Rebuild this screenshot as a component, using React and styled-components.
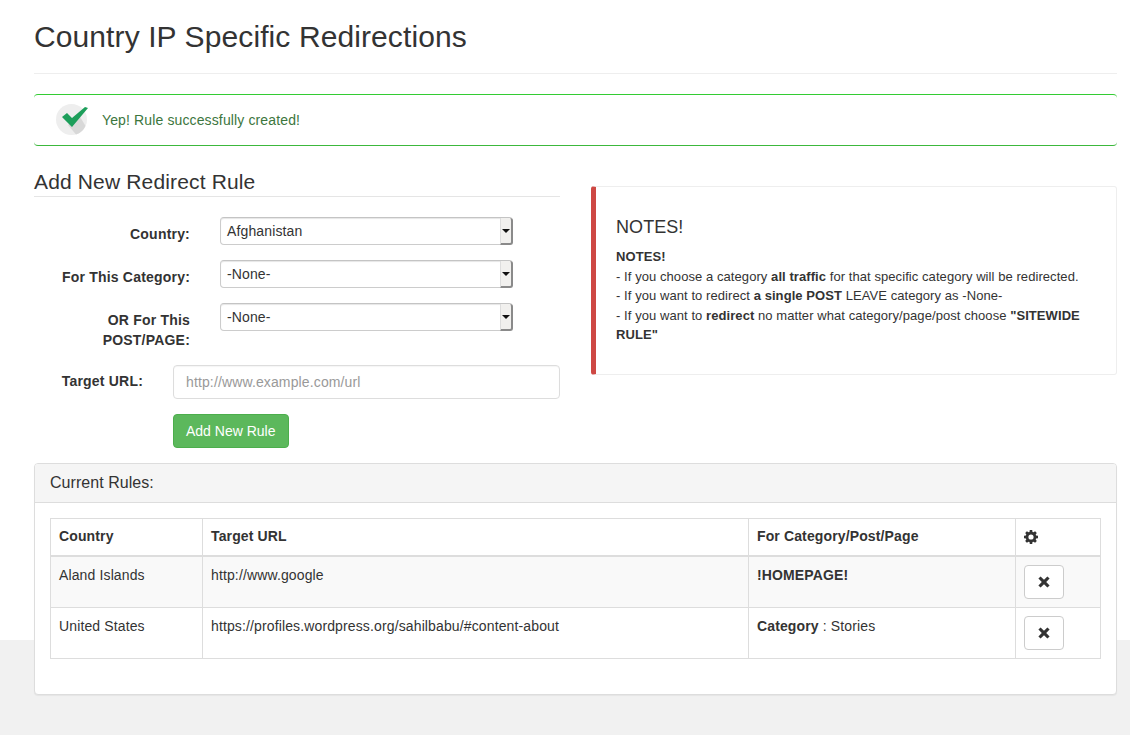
import React from 'react';
import styled, { createGlobalStyle } from 'styled-components';

const GlobalStyle = createGlobalStyle`
  html, body {
    margin: 0;
    padding: 0;
  }
  body {
    min-height: 735px;
    background: linear-gradient(#fff 640px, #f1f1f1 640px);
    font-family: "Liberation Sans", Arial, sans-serif;
    font-size: 14px;
    line-height: 20px;
    letter-spacing: 0.13px;
    color: #333;
  }
  * {
    box-sizing: border-box;
  }
`;

const Page = styled.div`
  padding: 0 13px 40px 34px;
`;

const Title = styled.h1`
  margin: 0;
  padding: 20px 0 20px;
  font-size: 30px;
  line-height: 33px;
  font-weight: 400;
  letter-spacing: 0.1px;
  border-bottom: 1px solid #eee;
`;

const SuccessAlert = styled.div`
  display: flex;
  align-items: center;
  gap: 12px;
  height: 52px;
  margin-top: 20px;
  padding-left: 22px;
  border-top: 1px solid #33cc33;
  border-bottom: 1px solid #3cb83c;
  border-radius: 4px;
  color: #3c763d;
`;

const Columns = styled.div`
  display: grid;
  grid-template-columns: 526px 526px;
  column-gap: 31px;
  margin-top: 24px;
`;

const SectionTitle = styled.h3`
  margin: 0 0 20px;
  padding-bottom: 3px;
  font-size: 21px;
  line-height: 23px;
  font-weight: 400;
  letter-spacing: 0.15px;
  border-bottom: 1px solid #e5e5e5;
`;

const SelectRow = styled.div`
  display: grid;
  grid-template-columns: 156px 293px;
  column-gap: 30px;
  margin-bottom: 15px;
`;

const RowLabel = styled.label`
  padding-top: ${(p) => p.$top || 7}px;
  font-weight: 700;
  letter-spacing: 0.2px;
  text-align: right;
`;

const SelectBox = styled.div`
  display: flex;
  justify-content: space-between;
  height: 28px;
  padding-left: 6px;
  line-height: 26px;
  background: #fff;
  border: 1px solid #ccc;
  border-top-color: #c4c4c4;
  border-radius: 4px;
  box-shadow: inset 0 1px 1px rgba(0, 0, 0, 0.1);
`;

const SelectArrow = styled.span`
  position: relative;
  width: 13px;
  margin: 0 -1px -1px 0;
  background: #f1f0ee;
  border-left: 1px solid #ddd;
  border-right: 2px solid #8a8a8a;
  border-bottom: 2px solid #8a8a8a;
  border-radius: 0 3px 3px 0;

  &::after {
    content: "";
    position: absolute;
    top: 11px;
    left: 1px;
    border-left: 4px solid transparent;
    border-right: 4px solid transparent;
    border-top: 4px solid #111;
  }
`;

const UrlRow = styled.div`
  display: grid;
  grid-template-columns: 109px 387px;
  column-gap: 30px;
  margin-top: 15px;
`;

const UrlInput = styled.input`
  width: 100%;
  height: 34px;
  padding: 6px 12px;
  font: inherit;
  letter-spacing: inherit;
  color: #555;
  background: #fff;
  border: 1px solid #ddd;
  border-radius: 4px;
  box-shadow: inset 0 1px 1px rgba(0, 0, 0, 0.04);

  &::placeholder {
    color: #999;
    opacity: 1;
  }
`;

const AddButton = styled.button`
  display: block;
  height: 34px;
  margin: 15px 0 0 139px;
  padding: 0 12px;
  font: inherit;
  letter-spacing: 0;
  color: #fff;
  background: #5cb85c;
  border: 1px solid #4cae4c;
  border-radius: 4px;
`;

const NotesCard = styled.aside`
  height: 189px;
  margin-top: 16px;
  padding: 30px 20px 0 20px;
  font-size: 13px;
  line-height: 19.5px;
  letter-spacing: 0.07px;
  border: 1px solid #eee;
  border-left: 5px solid #ce4844;
  border-radius: 3px;
`;

const NotesTitle = styled.h4`
  margin: 0 0 10px;
  font-size: 18px;
  line-height: 20px;
  font-weight: 400;
`;

const NotesLine = styled.div``;

const RulesPanel = styled.section`
  height: 232px;
  margin-top: 15px;
  background: #fff;
  border: 1px solid #ddd;
  border-radius: 4px;
  box-shadow: 0 1px 1px rgba(0, 0, 0, 0.05);
`;

const PanelHeading = styled.div`
  height: 39px;
  padding: 10px 15px 8px;
  font-size: 16px;
  line-height: 18px;
  letter-spacing: 0.05px;
  background: #f5f5f5;
  border-bottom: 1px solid #ddd;
  border-radius: 3px 3px 0 0;
`;

const PanelBody = styled.div`
  padding: 15px;
`;

const RulesTable = styled.table`
  width: 100%;
  table-layout: fixed;
  border-collapse: collapse;
`;

const HeadCell = styled.th`
  width: ${(p) => p.$width}px;
  height: 37px;
  padding: 7px 8px 9px;
  text-align: left;
  vertical-align: middle;
  border: 1px solid #ddd;
  border-bottom-width: 2px;
`;

const Row = styled.tr`
  background: ${(p) => (p.$striped ? '#f9f9f9' : '#fff')};
`;

const Cell = styled.td`
  height: 51px;
  padding: 8px;
  vertical-align: top;
  border: 1px solid #ddd;
`;

const DeleteButton = styled.button`
  display: flex;
  align-items: center;
  justify-content: center;
  width: 40px;
  height: 34px;
  padding: 0;
  background: #fff;
  border: 1px solid #ccc;
  border-radius: 4px;
  color: #333;
`;

const GearSvg = styled.svg`
  display: block;
  margin-top: 2px;
`;

function CheckBadge() {
  return (
    <svg width="34" height="32" viewBox="0 0 34 32">
      <circle cx="15.5" cy="15.5" r="15.5" fill="#eee" />
      <path d="M12 21 L23 11 L29.5 22 A15.5 15.5 0 0 1 20 30.5 Z" fill="#d8d8d8" />
      <path d="M6 13 L11 9 L16 14 L29 3 L32 4 L16 23 Z" fill="#1c9e5a" />
    </svg>
  );
}

function GearIcon() {
  return (
    <GearSvg width="14" height="14" viewBox="0 0 14 14">
      <path
        fill="#333"
        fillRule="evenodd"
        d="M5.8 0h2.4l.3 1.9 1 .4L11.1 1.2l1.7 1.7-1.1 1.6.4 1L14 5.8v2.4l-1.9.3-.4 1 1.1 1.6-1.7 1.7-1.6-1.1-1 .4L8.2 14H5.8l-.3-1.9-1-.4-1.6 1.1-1.7-1.7 1.1-1.6-.4-1L0 8.2V5.8l1.9-.3.4-1L1.2 2.9l1.7-1.7 1.6 1.1 1-.4zM7 4.4a2.6 2.6 0 1 0 0 5.2 2.6 2.6 0 0 0 0-5.2z"
      />
    </GearSvg>
  );
}

function CrossIcon() {
  return (
    <svg width="12" height="12" viewBox="0 0 12 12">
      <path
        fill="#333"
        d="M2.6 0.4 L6 3.8 L9.4 0.4 L11.6 2.6 L8.2 6 L11.6 9.4 L9.4 11.6 L6 8.2 L2.6 11.6 L0.4 9.4 L3.8 6 L0.4 2.6 Z"
      />
    </svg>
  );
}

function FakeSelect({ value }) {
  return (
    <SelectBox>
      <span>{value}</span>
      <SelectArrow />
    </SelectBox>
  );
}

const rules = [
  { country: 'Aland Islands', url: 'http://www.google', target: <b>!HOMEPAGE!</b> },
  {
    country: 'United States',
    url: 'https://profiles.wordpress.org/sahilbabu/#content-about',
    target: (
      <>
        <b>Category</b> : Stories
      </>
    ),
  },
];

function App() {
  return (
    <Page>
      <GlobalStyle />
      <Title>Country IP Specific Redirections</Title>
      <SuccessAlert>
        <CheckBadge />
        <span>Yep! Rule successfully created!</span>
      </SuccessAlert>

      <Columns>
        <div>
          <SectionTitle>Add New Redirect Rule</SectionTitle>
          <SelectRow>
            <RowLabel>Country:</RowLabel>
            <FakeSelect value="Afghanistan" />
          </SelectRow>
          <SelectRow>
            <RowLabel>For This Category:</RowLabel>
            <FakeSelect value="-None-" />
          </SelectRow>
          <SelectRow>
            <RowLabel>OR For This POST/PAGE:</RowLabel>
            <FakeSelect value="-None-" />
          </SelectRow>
          <UrlRow>
            <RowLabel $top={6}>Target URL:</RowLabel>
            <UrlInput placeholder="http://www.example.com/url" />
          </UrlRow>
          <AddButton>Add New Rule</AddButton>
        </div>

        <NotesCard>
          <NotesTitle>NOTES!</NotesTitle>
          <NotesLine><b>NOTES!</b></NotesLine>
          <NotesLine>- If you choose a category <b>all traffic</b> for that specific category will be redirected.</NotesLine>
          <NotesLine>- If you want to redirect <b>a single POST</b> LEAVE category as -None-</NotesLine>
          <NotesLine>- If you want to <b>redirect</b> no matter what category/page/post choose <b>"SITEWIDE RULE"</b></NotesLine>
        </NotesCard>
      </Columns>

      <RulesPanel>
        <PanelHeading>Current Rules:</PanelHeading>
        <PanelBody>
          <RulesTable>
            <thead>
              <tr>
                <HeadCell $width={152}>Country</HeadCell>
                <HeadCell $width={546}>Target URL</HeadCell>
                <HeadCell $width={267}>For Category/Post/Page</HeadCell>
                <HeadCell><GearIcon /></HeadCell>
              </tr>
            </thead>
            <tbody>
              {rules.map((rule, i) => (
                <Row key={rule.country} $striped={i === 0}>
                  <Cell>{rule.country}</Cell>
                  <Cell>{rule.url}</Cell>
                  <Cell>{rule.target}</Cell>
                  <Cell>
                    <DeleteButton><CrossIcon /></DeleteButton>
                  </Cell>
                </Row>
              ))}
            </tbody>
          </RulesTable>
        </PanelBody>
      </RulesPanel>
    </Page>
  );
}

export default App;
